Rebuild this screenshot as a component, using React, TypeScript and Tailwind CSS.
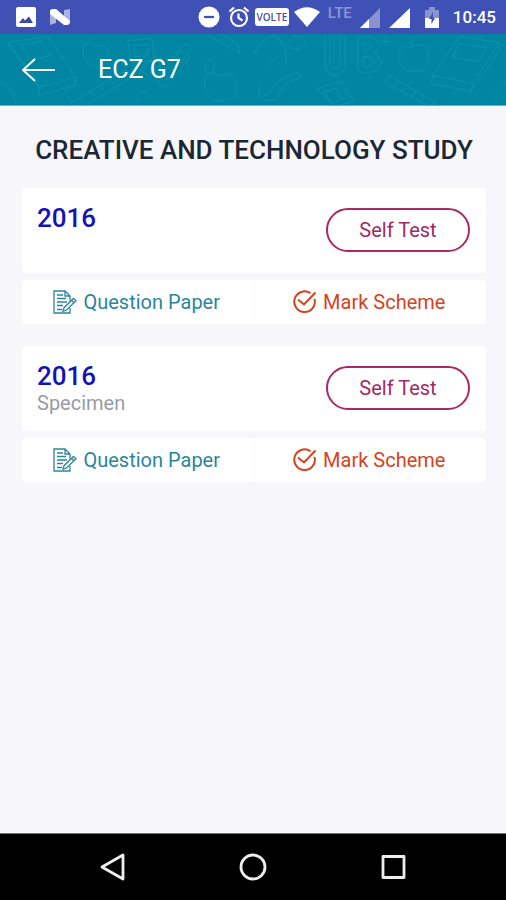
import type { ReactNode } from "react";

function StatusBar() {
  return (
    <div className="flex h-[34px] shrink-0 items-center justify-between bg-[#3f51b5] pr-[10px] pl-4 text-white">
      <div className="flex items-center gap-[13px]">
        <svg className="h-5 w-5" viewBox="0 0 20 20" aria-hidden="true">
          <rect width="20" height="20" rx="2" fill="#fff" />
          <path d="M3 16l4-5 2 2.500 4-4 4 6.500z" fill="#3949a8" />
        </svg>
        <svg className="h-[18px] w-[22px]" viewBox="0 0 22 18" aria-hidden="true">
          <path d="M1 2h6v13l-6 2zM15 2l6-1v14h-6z" fill="#a9b3e0" />
          <path d="M1 4q0-3 3-3h3L21 13q0 4-3 4h-3L1 6z" fill="#fff" />
        </svg>
      </div>
      <div className="flex items-center">
        <svg className="h-[22px] w-[22px]" viewBox="0 0 22 22" aria-hidden="true">
          <circle cx="11" cy="11" r="10.5" fill="#fff" />
          <path d="M6 11h10" stroke="#3f51b5" strokeWidth="2.2" />
        </svg>
        <svg className="ml-2 h-[22px] w-[22px]" viewBox="0 0 22 22" fill="none" stroke="#fff" strokeWidth="2.2" aria-hidden="true">
          <circle cx="11" cy="12" r="8" />
          <path d="M1.500 5.500l4.500-4M20.500 5.500l-4.500-4M10.500 7.500V12l4 2.500" />
        </svg>
        <span className="ml-[5px] flex h-[18px] w-[34px] items-center justify-center rounded-[3px] bg-white font-['Open_Sans',sans-serif] text-[10px] font-semibold text-[#4a5299]">
          VOLTE
        </span>
        <svg className="ml-[5px] h-5 w-[26px]" viewBox="0 0 26 20" aria-hidden="true">
          <path d="M0 5Q13-4.500 26 5L13 20z" fill="#fff" />
        </svg>
        <span className="mb-2 ml-2 w-[25px] text-[15px] leading-4 font-medium text-[#8c96d2]">LTE</span>
        <svg className="ml-[7px] h-[22px] w-5" viewBox="0 0 20 22" aria-hidden="true">
          <path d="M0 22L20 2v20z" fill="#8893cf" />
          <path d="M0 22l9-9v9z" fill="#fff" />
        </svg>
        <svg className="ml-[9px] h-[22px] w-[21px]" viewBox="0 0 21 22" aria-hidden="true">
          <path d="M0 22L21 2v20z" fill="#fff" />
        </svg>
        <svg className="ml-[15px] h-[22px] w-[14px]" viewBox="0 0 14 22" aria-hidden="true">
          <path d="M4 1h6v3h4v9H0V4h4z" fill="#8893cf" />
          <path d="M0 12h14v10H0z" fill="#fff" />
          <path d="M8 6L4 13h2.500v5L10 12H8z" fill="#3f51b5" />
        </svg>
        <span className="ml-[14px] text-[17px] leading-5 font-medium">10:45</span>
      </div>
    </div>
  );
}

function HeaderPattern() {
  return (
    <svg
      className="absolute inset-0 h-full w-full"
      viewBox="0 0 506 72"
      preserveAspectRatio="xMidYMid slice"
      fill="none"
      stroke="#2599b3"
      strokeOpacity="0.5"
      strokeLinejoin="round"
      strokeLinecap="round"
      aria-hidden="true"
    >
      <path d="M8 9l40-6 28 41-37 10zM39 54l-3-9L8 9M76 44l-1 8-36 10v-8M21 11l20-3 10 14-20 4z" />
      <path d="M84 12c-3 10 2 18 10 20 6 2 10-4 14-10 2-8-6-13-13-9-4-4-8-5-11-1zM92 8c0-4 3-6 6-7" />
      <path d="M128 7l24-2 2 22-22 2zM134 12l13-1 1 11-13 1zM140 36l16-14 8 6-16 14z" />
      <path d="M166 46c8-8 18-20 24-29 4-5-3-9-7-4l-23 30c-5 8 4 14 10 6l20-26" />
      <path d="M207 1l22 13 11 6-4-11-18-11M229 14l4-7" />
      <path d="M207 40c-6 8-1 23 7 27 7 2 8-2 15-1 8-2 10-15 4-22-5-5-10-3-14-1-5-4-9-5-12-3zM206 38c-2-4 0-10 5-13 4 4 4 10 1 14" />
      <path d="M70 70l56-34 5 8-43 26M80 64l3 4M90 58l3 4M100 52l3 4M110 46l3 4" />
      <path d="M0 48c8 2 12 10 16 22M138 68c-2-10 8-14 12-4" />
      <path d="M255 20c3-10 10-15 20-18M275 2c8 5 12 15 11 30M278 22l-10 11M286 10c4 8 18 8 20-4M292 1c4 4 10 3 14 0" />
      <path d="M260 51c-4 10 2 18 12 16 8-2 8-12 15-17l14-7-2-4-15 5c-12 6-12 18-19 18" />
      <path d="M325 2v28c0 16 20 16 20 0V2M330 2v26c0 9 10 9 10 0V2M334 4v21" />
      <path d="M358 5v33c24 5 30-12 15-18 12-7 4-21-15-15zM364 10c9-3 9 8 0 7zM364 23c12-2 12 13 0 10zM381 8h10M386 3v10" />
      <path d="M402 14c-8 8-1 24 9 24 5-2 8 1 12-1 8-6 7-22-1-25-5-2-8 2-11 2-4-2-7-2-9 0zM411 13c0-5 2-9 7-11" />
      <path d="M460 3l39 6-26 41-40-8zM433 42l-2 8 40 8 2-8M471 58l28-41V9M459 10l28 4-9 14-25-4z" />
      <path d="M389 42l47 27-7 4-43-24zM397 49l-3 4M406 54l-3 4M415 59l-3 4M424 64l-3 4" />
      <path d="M317 55l24-7 12 20-17 5zM324 58l12-3 7 11-11 3zM494 69c0-10 6-16 12-20" />
    </svg>
  );
}

function AppHeader() {
  return (
    <header className="relative flex h-[72px] shrink-0 items-center border-b border-[#5cb2c4] bg-[#0086a3] pl-[22px] text-white">
      <HeaderPattern />
      <button type="button" aria-label="Back" className="relative h-6 w-[34px]">
        <svg className="h-6 w-[34px]" viewBox="0 0 34 24" fill="none" stroke="currentColor" strokeWidth="2" aria-hidden="true">
          <path d="M33 12H1M13 1L1 12l12 11" strokeLinejoin="round" />
        </svg>
      </button>
      <h1 className="relative ml-[42px] text-[25px] leading-8 font-normal">ECZ G7</h1>
    </header>
  );
}

function PaperIcon() {
  return (
    <svg className="h-6 w-6" viewBox="0 0 24 24" fill="none" stroke="#2c8599" strokeWidth="1.300" aria-hidden="true">
      <path d="M17 18v5H1V1h11l5 5v5M12 1v5h5" />
      <path d="M4 5h6M4 8.500h9M4 12h10M4 15.500h6M4 19.500h5" strokeWidth="1.500" />
      <path d="M20.500 8.500l2.500 2.300-9.500 9.200-3.500 1.200 1-3.500zM18.500 10.500l2.500 2.300" />
    </svg>
  );
}

function MarkIcon() {
  return (
    <svg className="h-6 w-6" viewBox="0 0 24 24" fill="none" stroke="currentColor" strokeWidth="2" aria-hidden="true">
      <path d="M17.500 3.300A10.300 10.300 0 1 0 21.500 9" />
      <path d="M5 9.500l6 5L22.500 2.500" />
    </svg>
  );
}

function PaperAction({ icon, label, tone }: { icon: ReactNode; label: string; tone: string }) {
  return (
    <button type="button" className={`flex h-11 flex-1 items-center justify-center gap-[6px] pr-[2px] text-[20px] leading-6 ${tone}`}>
      {icon}
      {label}
    </button>
  );
}

function PaperCard({ year, note }: { year: string; note?: string }) {
  return (
    <article>
      <div className="flex h-[85px] items-start justify-between rounded bg-white pr-4 pl-[15px]">
        <div className="pt-[15px]">
          <h3 className="text-[26px] leading-[30px] font-medium text-[#1414b4]">{year}</h3>
          {note && <p className="text-[20px] leading-6 text-[#999ba1]">{note}</p>}
        </div>
        <button
          type="button"
          className="mt-5 h-11 w-36 rounded-full border-2 border-[#ab2860] text-[20px] leading-6 text-[#a12a62]"
        >
          Self Test
        </button>
      </div>
      <div className="mt-[7px] flex divide-x divide-[#fafafb] rounded bg-white">
        <PaperAction icon={<PaperIcon />} label="Question Paper" tone="text-[#2c8599]" />
        <PaperAction icon={<MarkIcon />} label="Mark Scheme" tone="text-[#d5431e]" />
      </div>
    </article>
  );
}

function NavigationBar() {
  return (
    <nav className="flex h-[67px] shrink-0 items-center justify-center gap-[112px] border-t border-[#777] bg-black text-[#eee]">
      <button type="button" aria-label="Back" className="h-7 w-7">
        <svg viewBox="0 0 28 28" fill="none" stroke="currentColor" strokeWidth="2.800" strokeLinejoin="round" aria-hidden="true">
          <path d="M24 2v24L3 14z" />
        </svg>
      </button>
      <button type="button" aria-label="Home" className="h-7 w-7">
        <svg viewBox="0 0 28 28" fill="none" stroke="currentColor" strokeWidth="2.800" aria-hidden="true">
          <circle cx="14" cy="14" r="12" />
        </svg>
      </button>
      <button type="button" aria-label="Recent apps" className="h-7 w-7">
        <svg viewBox="0 0 28 28" fill="none" stroke="currentColor" strokeWidth="2.800" strokeLinejoin="round" aria-hidden="true">
          <rect x="4" y="3.500" width="21" height="21" />
        </svg>
      </button>
    </nav>
  );
}

export default function App() {
  return (
    <div className="flex min-h-screen flex-col bg-[#f7f7fb] font-[Roboto,sans-serif]">
      <StatusBar />
      <AppHeader />
      <main className="flex-1 pr-5 pb-6 pl-[22px]">
        <h2 className="pt-7 text-center text-[26px] leading-8 font-medium text-[#1b2733]">CREATIVE AND TECHNOLOGY STUDY</h2>
        <div className="mt-[22px] flex flex-col gap-[22px]">
          <PaperCard year="2016" />
          <PaperCard year="2016" note="Specimen" />
        </div>
      </main>
      <NavigationBar />
    </div>
  );
}
